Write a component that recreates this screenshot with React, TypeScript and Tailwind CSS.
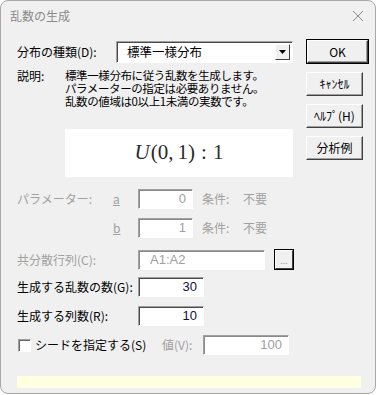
const jp = "font-['MS_UI_Gothic','Noto_Sans_CJK_JP',sans-serif]"

function Sunken({
  width,
  children,
  className = '',
  dark = false,
}: {
  width: string
  children?: React.ReactNode
  className?: string
  dark?: boolean
}) {
  return (
    <div
      className={`${width} h-[20px] bg-white border border-t-[#a0a0a0] border-l-[#a0a0a0] border-r-white border-b-white ${
        dark ? 'shadow-[inset_1px_1px_0_#4a4a4a]' : 'shadow-[inset_1px_1px_0_#8a8a8a]'
      } flex items-center px-[6px] text-[13px] font-['Liberation_Sans',sans-serif] ${className}`}
    >
      {children}
    </div>
  )
}

function Button({
  label,
  width = 'w-[57px]',
  isDefault = false,
}: {
  label: string
  width?: string
  isDefault?: boolean
}) {
  const inner = (
    <div className="flex-1 h-full flex items-center justify-center bg-[#f0f0f0] border border-t-white border-l-white border-r-[#404040] border-b-[#404040] shadow-[inset_-1px_-1px_0_#a0a0a0] text-[12px] text-black">
      {label}
    </div>
  )
  if (isDefault) {
    return (
      <div className={`${width} h-[25px] border border-black flex`}>{inner}</div>
    )
  }
  return <div className={`${width} h-[24px] flex`}>{inner}</div>
}

export default function App() {
  return (
    <div className={`w-[377px] h-[395px] bg-white ${jp}`}>
      <div className="w-[376px] h-[394px] bg-[#f0f0f0] border border-[#a8a8a8] rounded-[8px] overflow-hidden flex flex-col">
        {/* title bar */}
        <div className="h-[30px] flex items-center justify-between pl-[9px] pr-[9px]">
          <span className="text-[12px] text-[#8a8a8a]">乱数の生成</span>
          <svg width="12" height="12" viewBox="0 0 12 12" className="mr-[2px]">
            <path d="M1 1 L11 11 M11 1 L1 11" stroke="#8a8a8a" strokeWidth="1" />
          </svg>
        </div>

        <div className="pl-[16px] flex flex-col">
          <div className="flex">
            {/* left column */}
            <div className="w-[288px] pt-[10px] flex flex-col">
              <div className="flex items-center">
                <span className="w-[99px] text-[12px] text-black">分布の種類(D):</span>
                <div className="w-[177px] h-[22px] bg-white border border-t-[#a0a0a0] border-l-[#a0a0a0] border-r-white border-b-white shadow-[inset_1px_1px_0_#4a4a4a] flex items-center pl-[10px] pr-[2px]">
                  <span className="flex-1 text-[12.5px] text-black">標準一様分布</span>
                  <div className="w-[15px] h-[16px] bg-[#f0f0f0] border border-t-white border-l-white border-r-[#404040] border-b-[#404040] flex items-center justify-center">
                    <svg width="7" height="4" viewBox="0 0 7 4">
                      <path d="M0 0 H7 L3.5 4 Z" fill="#000" />
                    </svg>
                  </div>
                </div>
              </div>

              <div className="flex mt-[6px]">
                <span className="w-[48px] text-[12px] text-black leading-[13px]">説明:</span>
                <div className="text-[11.5px] text-black tracking-[-0.4px] flex flex-col">
                  <p className="h-[13px] leading-[13px]">標準一様分布に従う乱数を生成します。</p>
                  <p className="h-[13px] leading-[13px]">パラメーターの指定は必要ありません。</p>
                  <p className="h-[13px] leading-[13px]">乱数の値域は0以上1未満の実数です。</p>
                </div>
              </div>

              <div className="ml-[48px] mt-[21px] w-[228px] h-[48px] bg-white flex items-center justify-center font-['Liberation_Serif',serif] text-[21px] text-[#2a2a2a]">
                <span className="italic mr-[1px]">U</span>
                <span>(0,</span>
                <span className="ml-[4px]">1)</span>
                <span className="ml-[6px]">:</span>
                <span className="ml-[6px]">1</span>
              </div>
            </div>

            {/* right column: buttons */}
            <div className="pt-[8px] ml-[1px] flex flex-col gap-[8px]">
              <Button label="OK" width="w-[63px]" isDefault />
              <Button label="ｷｬﾝｾﾙ" />
              <Button label="ﾍﾙﾌﾟ(H)" />
              <Button label="分析例" />
            </div>
          </div>

          {/* parameter a */}
          <div className="flex items-center mt-[12px] text-[12px] text-[#a0a0a0]">
            <span className="w-[96px]">パラメーター:</span>
            <span className="w-[25px] underline">a</span>
            <Sunken width="w-[55px]" className="justify-end text-[#a0a0a0]">0</Sunken>
            <span className="ml-[9px] w-[41px]">条件:</span>
            <span>不要</span>
          </div>

          {/* parameter b */}
          <div className="flex items-center mt-[9px] text-[12px] text-[#a0a0a0]">
            <span className="w-[96px]" />
            <span className="w-[25px] underline">b</span>
            <Sunken width="w-[55px]" className="justify-end text-[#a0a0a0]">1</Sunken>
            <span className="ml-[9px] w-[41px]">条件:</span>
            <span>不要</span>
          </div>

          {/* covariance */}
          <div className="flex items-center mt-[11px] text-[12px] text-[#a0a0a0]">
            <span className="w-[121px]">共分散行列(C):</span>
            <Sunken width="w-[127px]" className="text-[#a0a0a0] pl-[11px]">A1:A2</Sunken>
            <div className="ml-[9px] w-[20px] h-[21px] border border-black flex">
              <div className="flex-1 bg-[#f0f0f0] border border-t-white border-l-white border-r-[#404040] border-b-[#404040] flex items-end justify-center pb-[3px] text-[9px] leading-none text-[#a0a0a0]">
                ...
              </div>
            </div>
          </div>

          {/* count */}
          <div className="flex items-center mt-[7px] text-[12px] text-black">
            <span className="w-[121px]">生成する乱数の数(G):</span>
            <Sunken width="w-[66px]" dark className="justify-end text-[#10103a]">30</Sunken>
          </div>

          <div className="flex items-center mt-[9px] text-[12px] text-black">
            <span className="w-[121px]">生成する列数(R):</span>
            <Sunken width="w-[66px]" dark className="justify-end text-[#10103a]">10</Sunken>
          </div>

          {/* seed */}
          <div className="flex items-center mt-[9px] text-[12px]">
            <div className="w-[13px] h-[13px] ml-[1px] bg-white border border-t-[#a0a0a0] border-l-[#a0a0a0] border-r-white border-b-white shadow-[inset_1px_1px_0_#696969]" />
            <span className="ml-[4px] w-[127px] text-black">シードを指定する(S)</span>
            <span className="w-[41px] text-[#a0a0a0]">値(V):</span>
            <Sunken width="w-[86px]" className="justify-end text-[#a0a0a0]">100</Sunken>
          </div>

          <div className="mt-[21px] w-[344px] h-[12px] bg-[#ffffe1]" />
        </div>
      </div>
    </div>
  )
}
